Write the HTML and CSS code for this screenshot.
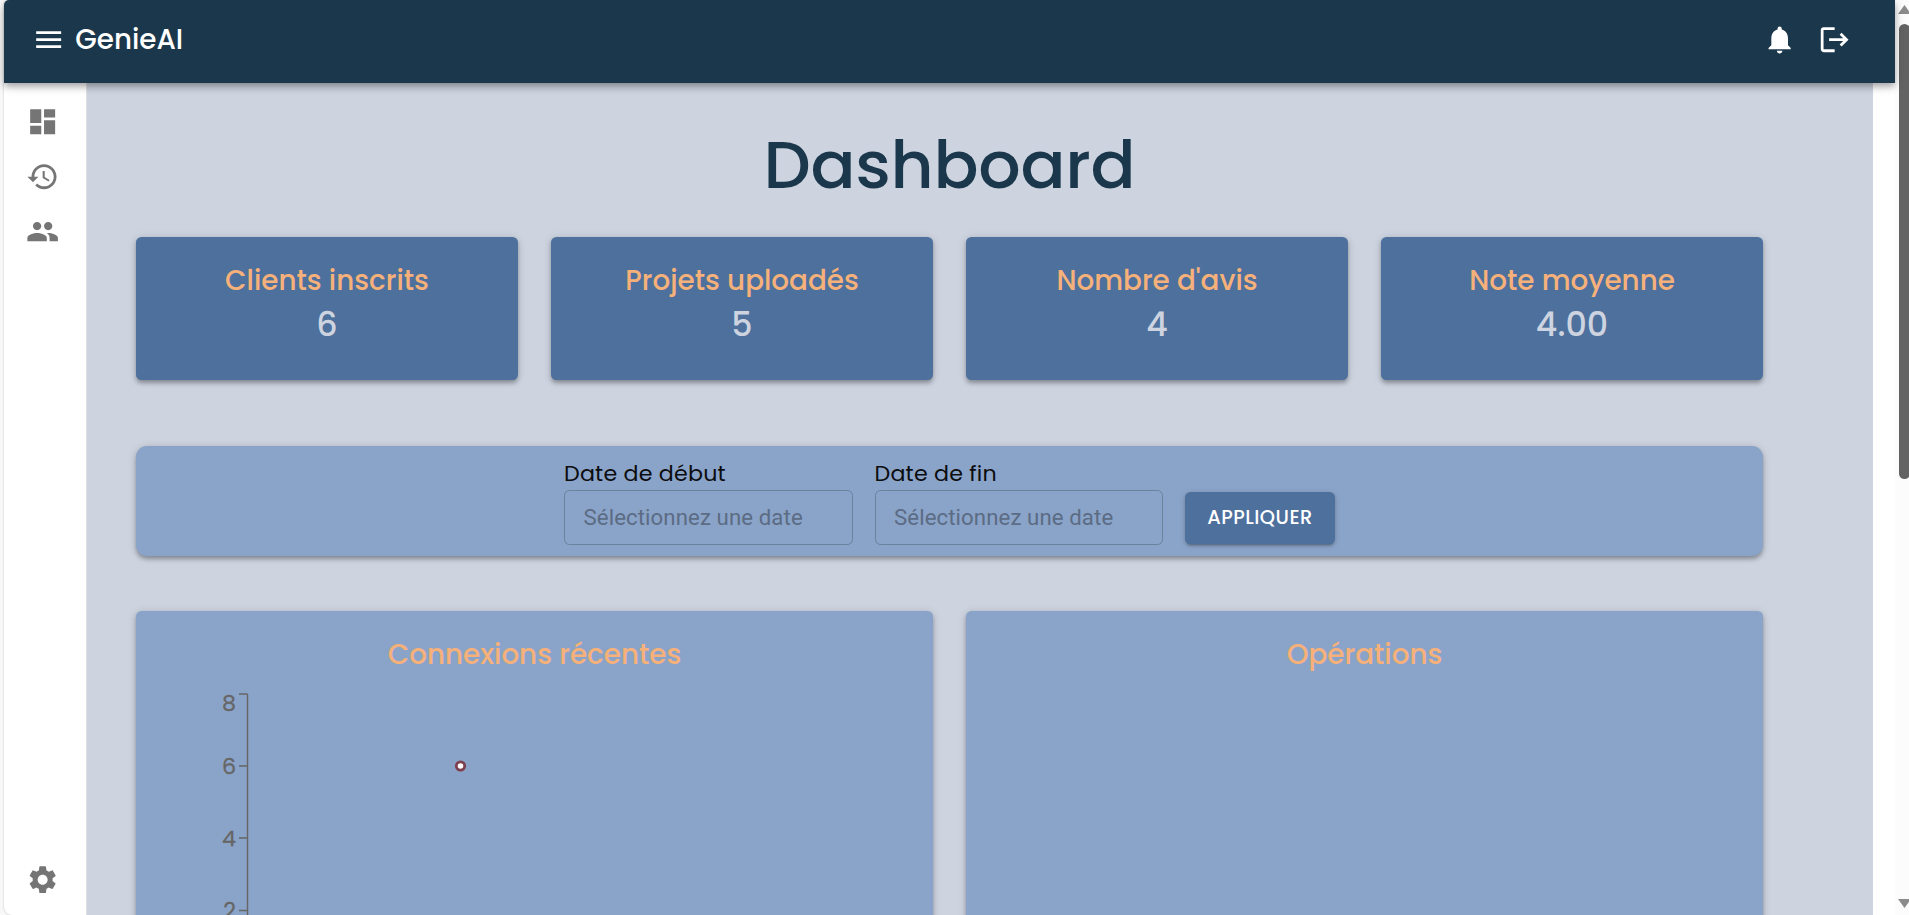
FILE: index.html
```html
<!DOCTYPE html>
<html lang="fr">
<head>
<meta charset="utf-8">
<title>GenieAI</title>
<link rel="stylesheet" href="styles.css">
</head>
<body>
<div class="window">
  <div class="app">
    <header class="topbar">
      <svg class="icon" viewBox="0 0 24 24"><path d="M3 18h18v-2H3v2zm0-5h18v-2H3v2zm0-7v2h18V6H3z"/></svg>
      <span class="brand">GenieAI</span>
      <div class="actions">
        <svg class="icon" viewBox="0 0 24 24"><path d="M12 22c1.100 0 2-.9 2-2h-4c0 1.100.89 2 2 2zm6-6v-5c0-3.070-1.640-5.640-4.500-6.320V4c0-.83-.67-1.500-1.500-1.500s-1.500.67-1.500 1.500v.68C7.630 5.360 6 7.920 6 11v5l-2 2v1h16v-1l-2-2z"/></svg>
        <svg class="icon" viewBox="0 0 24 24"><path d="m17 7-1.410 1.410L18.170 11H8v2h10.170l-2.580 2.580L17 17l5-5zM4 5h8V3H4c-1.100 0-2 .9-2 2v14c0 1.100.9 2 2 2h8v-2H4V5z"/></svg>
      </div>
    </header>
    <div class="body">
      <nav class="sidebar">
        <svg class="icon" viewBox="0 0 24 24"><path d="M3 13h8V3H3v10zm0 8h8v-6H3v6zm10 0h8V11h-8v10zm0-18v6h8V3h-8z"/></svg>
        <svg class="icon" viewBox="0 0 24 24"><path d="M13 3c-4.970 0-9 4.030-9 9H1l3.890 3.890.07.14L9 12H6c0-3.870 3.130-7 7-7s7 3.130 7 7-3.130 7-7 7c-1.930 0-3.680-.79-4.940-2.060l-1.420 1.420C8.270 19.990 10.510 21 13 21c4.970 0 9-4.030 9-9s-4.030-9-9-9zm-1 5v5l4.280 2.540.72-1.210-3.500-2.080V8H12z"/></svg>
        <svg class="icon" viewBox="0 0 24 24"><path d="M16 11c1.660 0 2.990-1.340 2.990-3S17.660 5 16 5c-1.660 0-3 1.340-3 3s1.340 3 3 3zm-8 0c1.660 0 2.990-1.340 2.990-3S9.660 5 8 5C6.340 5 5 6.340 5 8s1.340 3 3 3zm0 2c-2.330 0-7 1.170-7 3.500V19h14v-2.500c0-2.330-4.670-3.500-7-3.500zm8 0c-.29 0-.62.020-.97.050 1.160.84 1.970 1.970 1.970 3.450V19h6v-2.500c0-2.330-4.670-3.500-7-3.500z"/></svg>
        <svg class="icon settings" viewBox="0 0 24 24"><path d="M19.140 12.940c.04-.3.060-.61.060-.94 0-.32-.02-.64-.07-.94l2.030-1.580c.18-.14.230-.41.120-.61l-1.920-3.320c-.12-.22-.37-.29-.59-.22l-2.390.96c-.5-.38-1.030-.7-1.620-.94l-.36-2.540c-.04-.24-.24-.41-.48-.41h-3.840c-.24 0-.43.170-.47.410l-.36 2.540c-.59.240-1.130.570-1.620.940l-2.390-.96c-.22-.08-.47 0-.59.220L2.740 8.870c-.12.210-.08.470.120.610l2.030 1.580c-.05.300-.09.630-.09.940s.02.640.070.940l-2.030 1.580c-.18.140-.23.410-.12.610l1.920 3.320c.12.220.37.290.59.220l2.390-.96c.5.380 1.030.700 1.620.940l.36 2.540c.05.240.24.410.48.410h3.840c.24 0 .44-.17.470-.41l.36-2.540c.59-.24 1.130-.56 1.620-.94l2.390.96c.22.080.47 0 .59-.22l1.920-3.320c.12-.22.070-.47-.12-.61l-2.010-1.580zM12 15.600c-1.980 0-3.600-1.620-3.600-3.600s1.620-3.600 3.600-3.600 3.600 1.620 3.600 3.600-1.620 3.600-3.600 3.600z"/></svg>
      </nav>
      <main class="main">
        <h1 class="title">Dashboard</h1>
        <section class="stats">
          <div class="card"><h2 class="heading">Clients inscrits</h2><p class="value">6</p></div>
          <div class="card"><h2 class="heading">Projets uploadés</h2><p class="value">5</p></div>
          <div class="card"><h2 class="heading">Nombre d'avis</h2><p class="value">4</p></div>
          <div class="card"><h2 class="heading">Note moyenne</h2><p class="value">4.00</p></div>
        </section>
        <section class="filter">
          <label class="field"><span class="label">Date de début</span><input class="input" placeholder="Sélectionnez une date"></label>
          <label class="field"><span class="label">Date de fin</span><input class="input" placeholder="Sélectionnez une date"></label>
          <button class="apply">APPLIQUER</button>
        </section>
        <section class="charts">
          <div class="panel">
            <h2 class="heading">Connexions récentes</h2>
            <svg class="chart" width="797" height="300" viewBox="0 0 797 300">
              <path class="axis" d="M111.500 300V19M103 19h8.500M103 91h8.500M103 163h8.500M103 235.500h8.500"/>
              <g class="ticks">
                <text x="100" y="36">8</text>
                <text x="100" y="99">6</text>
                <text x="100" y="171">4</text>
                <text x="100" y="243">2</text>
              </g>
              <circle class="point" cx="324.500" cy="91" r="4.200"/>
            </svg>
          </div>
          <div class="panel"><h2 class="heading">Opérations</h2></div>
        </section>
      </main>
    </div>
  </div>
  <div class="scrollbar">
    <div class="arrow up"></div>
    <div class="thumb"></div>
    <div class="arrow down"></div>
  </div>
</div>
</body>
</html>
```
FILE: styles.css
```css
* { box-sizing: border-box; margin: 0; padding: 0; }
body {
  height: 915px;
  overflow: hidden;
  background: #f8f8f8;
  font-family: Poppins, Inter, "Open Sans", sans-serif;
  font-weight: 500;
}
.window { display: flex; height: 915px; padding-left: 4px; overflow: hidden; }
.app {
  display: flex;
  flex-direction: column;
  width: 1891px;
  background: #fff;
  border-radius: 5px 0 0 8px;
  box-shadow: 0 0 2px rgba(0, 0, 0, .25);
}
.topbar {
  position: relative;
  z-index: 1;
  display: flex;
  align-items: center;
  flex: none;
  height: 83px;
  padding: 0 44px 4px 28px;
  background: #1b374c;
  color: #fff;
  border-top-left-radius: 5px;
  box-shadow: 0 3px 6px -1px rgba(0, 0, 0, .2), 0 5px 7px rgba(0, 0, 0, .14), 0 1px 14px rgba(0, 0, 0, .12);
}
.icon { display: block; flex: none; width: 33.3px; height: 33.3px; fill: currentColor; }
.brand { margin: 0 0 0 10px; font-size: 27.8px; line-height: 40px; }
.actions { display: flex; gap: 21.500px; margin-left: auto; }
.body { display: flex; flex: 1; min-height: 0; }
.sidebar {
  display: flex;
  flex-direction: column;
  align-items: center;
  gap: 21.700px;
  flex: none;
  width: 83px;
  padding: 21.800px 4.500px 19px 0;
  border-right: 1px solid #dfe0e2;
  color: #757575;
}
.settings { margin-top: auto; }
.main {
  flex: none;
  width: 1786px;
  height: 832px;
  padding: 42px 110px 0 49px;
  background: #cdd4e0;
  overflow: hidden;
}
.title {
  margin-bottom: 32px;
  color: #1b374c;
  font-size: 66.600px;
  font-weight: 500;
  line-height: 80px;
  letter-spacing: -.3px;
  text-align: center;
}
.stats, .charts { display: grid; gap: 33px; }
.stats { grid-template-columns: repeat(4, 1fr); }
.card, .panel, .filter {
  box-shadow: 0 4px 4px -1.500px rgba(0, 0, 0, .2), 0 2px 5px rgba(0, 0, 0, .14), 0 1px 10px rgba(0, 0, 0, .12);
}
.card {
  height: 143px;
  padding-top: 24px;
  border-radius: 5.500px;
  background: #4d709d;
  text-align: center;
}
.heading {
  color: #f6b17a;
  font-size: 27.800px;
  font-weight: 500;
  line-height: 40px;
  text-align: center;
}
.value { color: #cdd4e0; font-size: 33.300px; line-height: 48px; }
.filter {
  display: flex;
  justify-content: center;
  align-items: flex-end;
  gap: 22px;
  height: 110px;
  margin: 66px 0 55px;
  padding-bottom: 11px;
  border-radius: 11px;
  background: #8aa3c8;
}
.field { display: flex; flex-direction: column; width: 288.500px; }
.label { margin-bottom: 2px; color: #0c0d0f; font-size: 22.200px; font-weight: 400; line-height: 28px; letter-spacing: .00938em; }
.input {
  width: 100%;
  height: 55px;
  padding: 0 18.500px 2px;
  border: 1px solid #6a829b;
  border-radius: 5.500px;
  background: transparent;
  font: 400 22.200px Roboto, sans-serif;
  letter-spacing: .1px;
}
.input::placeholder { color: #5b6c84; opacity: 1; }
.apply {
  width: 150px;
  height: 52px;
  margin-bottom: 1px;
  padding-bottom: 1px;
  border: 0;
  border-radius: 5.500px;
  background: #4d709d;
  box-shadow: 0 3px 2px -2px rgba(0, 0, 0, .2), 0 2px 3px rgba(0, 0, 0, .14), 0 1px 6px rgba(0, 0, 0, .12);
  color: #fff;
  font: 500 19.400px/26px Poppins, Inter, sans-serif;
  letter-spacing: .45px;
}
.charts { grid-template-columns: repeat(2, 1fr); }
.panel { height: 420px; padding-top: 24px; border-radius: 5.500px; background: #8aa3c8; }
.chart { display: block; }
.axis { fill: none; stroke: #666; stroke-width: 1.400; }
.ticks { fill: #666; stroke: #666; stroke-width: .3; font-size: 22.200px; font-weight: 400; text-anchor: end; }
.point { fill: #fff; stroke: #7e404f; stroke-width: 2.800; }
.scrollbar {
  display: flex;
  flex-direction: column;
  flex: none;
  width: 14px;
  padding: 5px 0 7px 3px;
  background: #fcfcfc;
  overflow: hidden;
}
.arrow { flex: none; width: 13px; height: 9px; background: #8b8b8b; }
.up { clip-path: polygon(50% 0, 100% 100%, 0 100%); }
.down { margin-top: auto; clip-path: polygon(0 0, 100% 0, 50% 100%); }
.thumb { flex: none; width: 11px; height: 455px; margin: 10px 0 0 1px; border-radius: 5.500px; background: #636363; }
```
